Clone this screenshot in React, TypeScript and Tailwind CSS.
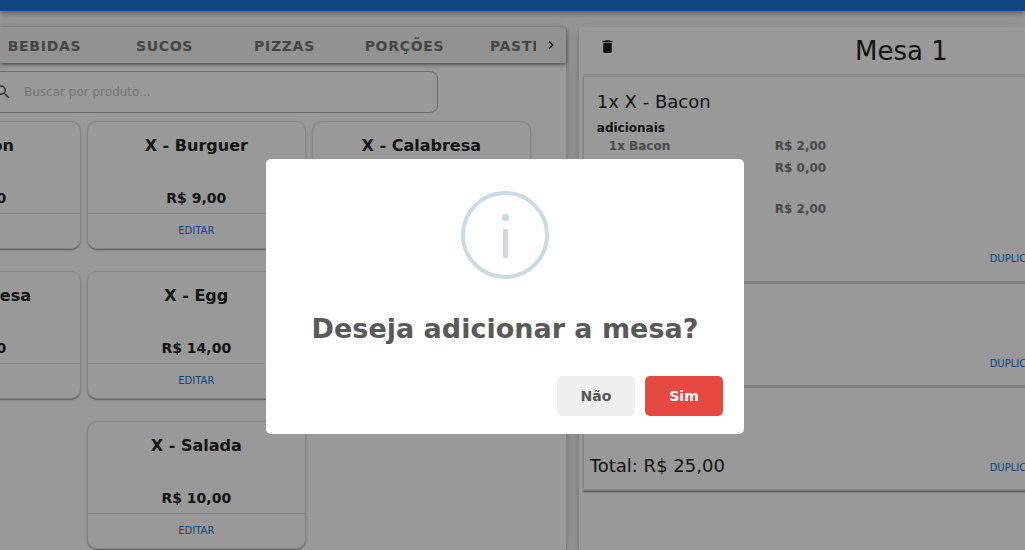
import React from "react";
import { MdChevronRight, MdDelete, MdSearch } from "react-icons/md";

type Product = { name: string; price: string };

const categories = ["Bebidas", "Sucos", "Pizzas", "Porções", "Pastéis"];

const rows: (Product | null)[][] = [
  [
    { name: "X - Bacon", price: "R$ 12,00" },
    { name: "X - Burguer", price: "R$ 9,00" },
    { name: "X - Calabresa", price: "R$ 12,00" },
  ],
  [
    { name: "X - Calabresa", price: "R$ 12,00" },
    { name: "X - Egg", price: "R$ 14,00" },
    null,
  ],
  [null, { name: "X - Salada", price: "R$ 10,00" }, null],
];

const raised =
  "shadow-[0_2px_1px_-1px_rgba(0,0,0,0.2),0_1px_1px_0_rgba(0,0,0,0.14),0_1px_3px_0_rgba(0,0,0,0.12)]";

const panelShadow =
  "shadow-[0_2px_4px_-1px_rgba(0,0,0,0.1),0_5px_6px_0_rgba(0,0,0,0.12),0_3px_14px_0_rgba(0,0,0,0.12)]";

function ProductCard({ name, price }: Product) {
  return (
    <article
      className={`flex h-32 flex-col rounded-[10px] border border-[#dedede] bg-white text-center text-[#222] ${raised}`}
    >
      <h2 className="mt-3 text-base leading-6 font-bold">{name}</h2>
      <p className="mt-auto pb-[3px] text-sm leading-6 font-bold">{price}</p>
      <div className="flex h-[35px] items-center justify-center border-t border-[#dedede]">
        <button type="button" className="px-2 text-[10px] leading-4 text-[#1976d2]">
          EDITAR
        </button>
      </div>
    </article>
  );
}

function Duplicate() {
  return (
    <button type="button" className="shrink-0 text-[10px] leading-4 text-[#1976d2]">
      DUPLICAR
    </button>
  );
}

const orderCard =
  "flex flex-col border border-b-2 border-[#d9d9d9] bg-white shadow-[0_2px_1px_-1px_rgba(0,0,0,0.25),0_1px_1px_0_rgba(0,0,0,0.16),0_1px_3px_0_rgba(0,0,0,0.12)]";

function Catalog() {
  return (
    <section className={`flex w-[55.2%] shrink-0 flex-col rounded-tr bg-white ${panelShadow}`}>
      <nav className="flex h-[37px] items-center rounded-tr bg-[#f3f3f3] shadow-[0_2px_4px_-1px_rgba(0,0,0,0.4),0_1px_4px_0_rgba(0,0,0,0.3)]">
        <div className="-ml-2 flex h-full min-w-0 flex-1 items-center overflow-hidden pt-[2px]">
          {categories.map((c) => (
            <button
              key={c}
              type="button"
              className="-ml-[15px] w-[135px] shrink-0 text-center text-sm font-bold tracking-wider text-[#737373] uppercase"
            >
              {c}
            </button>
          ))}
        </div>
        <button type="button" aria-label="Próximas categorias" className="flex w-[30px] justify-center text-[#1f1f1f]">
          <MdChevronRight size={16} />
        </button>
      </nav>
      <label className="mt-2 mr-32 flex h-11 items-center overflow-hidden rounded-r-lg border border-l-0 border-[#b8b8b8]">
        <MdSearch size={18} className="-ml-[6px] shrink-0 text-[#555]" />
        <input
          type="text"
          aria-label="Buscar por produto"
          placeholder="Buscar por produto..."
          className="ml-3 min-w-0 flex-1 bg-transparent text-xs outline-none placeholder:text-[#c4c4c4]"
        />
      </label>
      <div className="mt-[6px] flex justify-end overflow-hidden pt-[2px] pr-[35px] pb-4">
        <div className="grid shrink-0 grid-cols-[219px_219px_219px] gap-x-[6px] gap-y-[22px]">
          {rows.flat().map((p, i) => (p ? <ProductCard key={i} {...p} /> : <div key={i} />))}
        </div>
      </div>
    </section>
  );
}

function Order() {
  return (
    <section className="min-w-0 flex-1 overflow-hidden rounded-tl bg-white pl-1">
      <header className="flex h-12 items-center border-b border-[#d9d9d9]">
        <button type="button" aria-label="Excluir mesa" className="mb-2 ml-4 text-[#1f1f1f]">
          <MdDelete size={17} />
        </button>
        <h1 className="flex-1 pl-[162px] text-center text-[26px] leading-8 text-[#222]">Mesa 1</h1>
      </header>
      <div className="-mr-4 mt-px flex flex-col">
        <article className={`h-[207px] ${orderCard}`}>
          <div className="px-[13px] pt-[11px] text-[#222]">
            <h2 className="text-lg leading-7">1x X - Bacon</h2>
            <h3 className="text-xs leading-6 font-bold">adicionais</h3>
            <div className="flex text-xs leading-5 font-bold text-[#7a7a7a]">
              <p className="-mt-1 w-[178px] pl-3">1x Bacon</p>
              <div>
                <p className="-mt-1">R$ 2,00</p>
                <p className="mt-[2px]">R$ 0,00</p>
                <p className="mt-[21px]">R$ 2,00</p>
              </div>
            </div>
          </div>
          <div className="mt-auto flex justify-end pb-[14px]">
            <Duplicate />
          </div>
        </article>
        <article className={`h-[104px] justify-end ${orderCard}`}>
          <div className="flex justify-end pb-[13px]">
            <Duplicate />
          </div>
        </article>
        <article className={`h-[104px] justify-end ${orderCard}`}>
          <div className="flex items-end justify-between pb-[13px] pl-[6px]">
            <p className="text-lg leading-5 text-[#222]">Total: R$ 25,00</p>
            <Duplicate />
          </div>
        </article>
      </div>
    </section>
  );
}

function InfoIcon() {
  return (
    <svg viewBox="0 0 88 88" className="size-[88px]" fill="none" aria-hidden="true">
      <circle cx="44" cy="44" r="42" stroke="#c9dae1" strokeWidth="4" />
      <circle cx="44.5" cy="26.5" r="3.7" fill="#c9dae1" />
      <rect x="42" y="38" width="5" height="29" rx="2" fill="#c9dae1" />
    </svg>
  );
}

export default function App() {
  return (
    <div className="h-screen overflow-hidden bg-white font-['Verdana','DejaVu_Sans',sans-serif]">
      <div className="flex h-full flex-col">
        <div className="relative h-[11px] shrink-0 bg-[#1976d2] shadow-[0_2px_4px_-1px_rgba(0,0,0,0.2),0_4px_5px_0_rgba(0,0,0,0.14),0_1px_10px_0_rgba(0,0,0,0.12)]" />
        <main className="flex min-h-0 flex-1 items-stretch gap-[13px] bg-[#fafafa] pt-4">
          <Catalog />
          <div className={`flex min-w-0 flex-1 rounded-tl ${panelShadow}`}>
            <Order />
          </div>
        </main>
      </div>
      <div className="fixed inset-0 flex items-center justify-center bg-black/40 pt-[43px] pr-[15px]">
        <div role="dialog" aria-modal="true" aria-labelledby="dialog-title" className="w-[478px] rounded-[5px] bg-white">
          <div className="flex justify-center pt-8">
            <InfoIcon />
          </div>
          <h2 id="dialog-title" className="mt-8 text-center text-[27px] leading-9 font-bold text-[#595959]">
            Deseja adicionar a mesa?
          </h2>
          <div className="mt-[29px] flex justify-end gap-[10px] pr-[21px] pb-[18px]">
            <button type="button" className="h-10 w-[78px] rounded-[5px] bg-[#efefef] text-sm font-bold text-[#555]">
              Não
            </button>
            <button type="button" className="h-10 w-[78px] rounded-[5px] bg-[#e64942] text-sm font-bold text-white">
              Sim
            </button>
          </div>
        </div>
      </div>
    </div>
  );
}
